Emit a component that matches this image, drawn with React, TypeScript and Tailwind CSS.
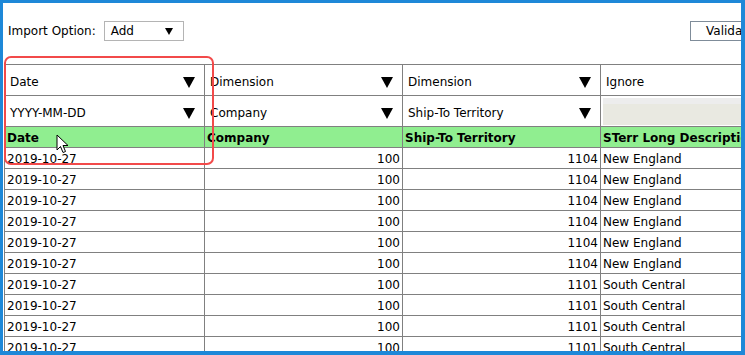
const rows = [
  { date: "2019-10-27", company: "100", territory: "1104", desc: "New England" },
  { date: "2019-10-27", company: "100", territory: "1104", desc: "New England" },
  { date: "2019-10-27", company: "100", territory: "1104", desc: "New England" },
  { date: "2019-10-27", company: "100", territory: "1104", desc: "New England" },
  { date: "2019-10-27", company: "100", territory: "1104", desc: "New England" },
  { date: "2019-10-27", company: "100", territory: "1104", desc: "New England" },
  { date: "2019-10-27", company: "100", territory: "1101", desc: "South Central" },
  { date: "2019-10-27", company: "100", territory: "1101", desc: "South Central" },
  { date: "2019-10-27", company: "100", territory: "1101", desc: "South Central" },
  { date: "2019-10-27", company: "100", territory: "1101", desc: "South Central" },
];

function Caret() {
  return (
    <svg width="12" height="12" viewBox="0 0 12 12" className="shrink-0">
      <polygon points="0,1 12,1 6,12" fill="#000" />
    </svg>
  );
}

function HeadSelect({ label }: { label: string }) {
  return (
    <div className="flex items-center justify-between pl-[5px] pr-[9px] pt-[4px]">
      <span>{label}</span>
      <Caret />
    </div>
  );
}

function Cursor() {
  return (
    <svg width="14" height="21" viewBox="0 0 14 21" className="absolute left-[53px] top-[131px]">
      <path
        d="M1 1 L1 16 L4.5 12.5 L7 18.5 L9.5 17.5 L7 11.5 L12 11.5 Z"
        fill="#fff"
        stroke="#000"
        strokeWidth="1"
        strokeLinejoin="round"
      />
    </svg>
  );
}

export default function App() {
  return (
    <div className="w-[745px] h-[355px] bg-[#1e88d8] pl-[3px] pt-[3px] pr-[4px] pb-[4px] font-['DejaVu_Sans',sans-serif] text-[12px] text-black">
      <div className="relative w-full h-full bg-white overflow-hidden">
        {/* TOOLBAR */}
        <div className="flex items-center h-[20px] mt-[18px] pl-[5px] relative">
          <span className="mr-[8px]">Import Option:</span>
          <div className="flex items-center justify-between w-[80px] h-[20px] border border-[#b4b4b4] pl-[6px] pr-[10px]">
            <span>Add</span>
            <svg width="8" height="7" viewBox="0 0 8 7">
              <polygon points="0,0 8,0 4,7" fill="#000" />
            </svg>
          </div>
          <div className="absolute left-[687px] top-0 w-[90px] h-[20px] border border-[#7f8c99] pl-[15px] leading-[18px]">
            Validate
          </div>
        </div>

        {/* GRID */}
        <table className="mt-[23px] ml-[1px] border-collapse table-fixed w-[840px]">
          <colgroup>
            <col className="w-[200px]" />
            <col className="w-[198px]" />
            <col className="w-[198px]" />
            <col className="w-[244px]" />
          </colgroup>
          <tbody>
            <tr className="h-[31px]">
              <td className="border border-[#808080] p-0"><HeadSelect label="Date" /></td>
              <td className="border border-[#808080] p-0"><HeadSelect label="Dimension" /></td>
              <td className="border border-[#808080] p-0"><HeadSelect label="Dimension" /></td>
              <td className="border border-[#808080] p-0">
                <div className="pl-[5px] pt-[4px]">Ignore</div>
              </td>
            </tr>
            <tr className="h-[31px]">
              <td className="border border-[#808080] p-0"><HeadSelect label="YYYY-MM-DD" /></td>
              <td className="border border-[#808080] p-0"><HeadSelect label="Company" /></td>
              <td className="border border-[#808080] p-0"><HeadSelect label="Ship-To Territory" /></td>
              <td className="border border-[#808080] p-0 pl-[2px]">
                <div className="h-[27px] bg-[#e9e9e1] border-t-[6px] border-[#ededed]"></div>
              </td>
            </tr>
            <tr className="h-[21px] bg-[#90ee90] font-bold">
              <td className="border border-[#808080] px-[2px] pt-[1px] pb-0">Date</td>
              <td className="border border-[#808080] px-[2px] pt-[1px] pb-0">Company</td>
              <td className="border border-[#808080] px-[2px] pt-[1px] pb-0">Ship-To Territory</td>
              <td className="border border-[#808080] px-[2px] pt-[1px] pb-0 whitespace-nowrap overflow-hidden">STerr Long Description</td>
            </tr>
            {rows.map((r, i) => (
              <tr key={i} className="h-[21px]">
                <td className="border border-[#808080] px-[2px] pt-[1px] pb-0">{r.date}</td>
                <td className="border border-[#808080] px-[2px] pt-[1px] pb-0 text-right">{r.company}</td>
                <td className="border border-[#808080] px-[2px] pt-[1px] pb-0 text-right">{r.territory}</td>
                <td className="border border-[#808080] px-[2px] pt-[1px] pb-0">{r.desc}</td>
              </tr>
            ))}
          </tbody>
        </table>

        {/* ANNOTATION */}
        <div className="absolute left-[1px] top-[53px] w-[210px] h-[109px] border-[2.5px] border-[#f24a4a] rounded-[7px] pointer-events-none"></div>
        <Cursor />
      </div>
    </div>
  );
}
